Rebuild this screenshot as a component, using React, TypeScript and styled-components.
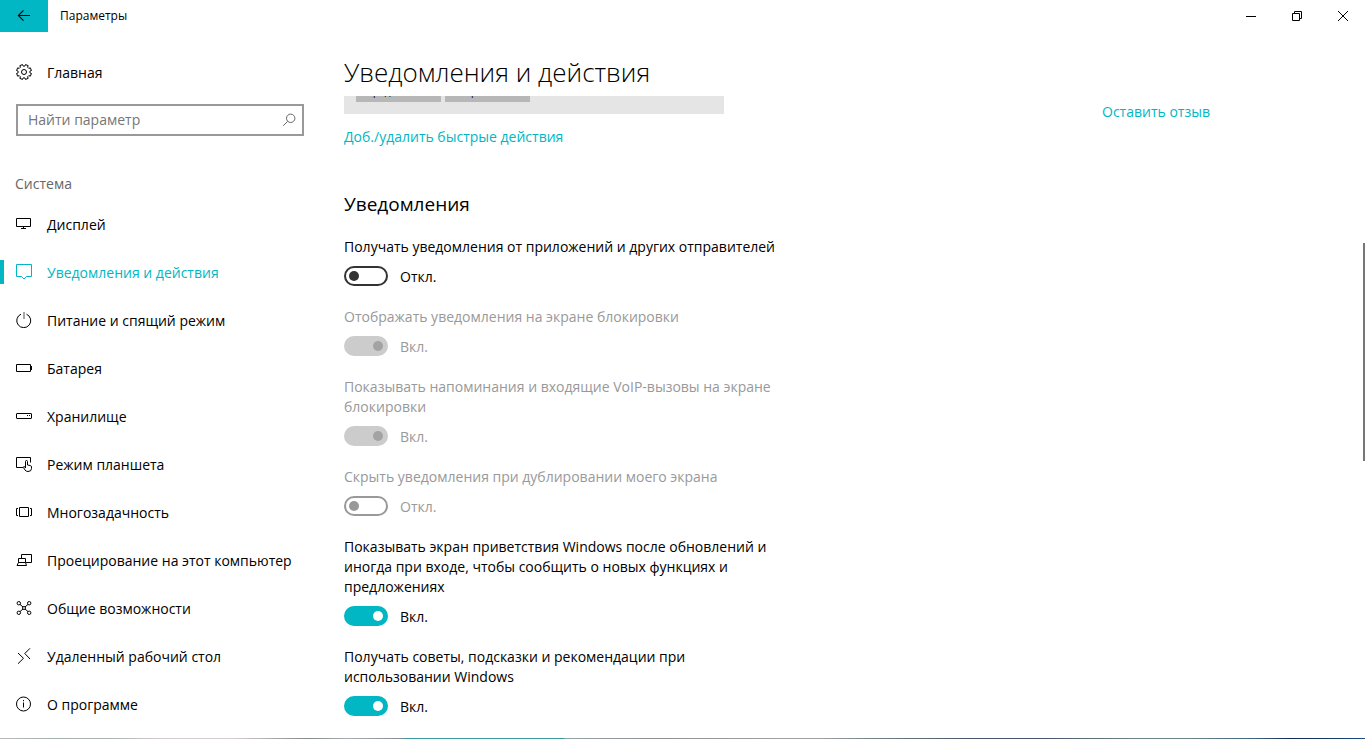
import React, { useId, useState } from "react";
import styled, { createGlobalStyle, css } from "styled-components";

const accent = "#00b7c3";

const GlobalStyle = createGlobalStyle`
  *, *::before, *::after { box-sizing: border-box; }
  body {
    margin: 0;
    background: #fff;
    color: #000;
    font: 14px/20px "Open Sans", "Noto Sans", sans-serif;
  }
  button, input { font: inherit; color: inherit; }
  h1, h2, p { margin: 0; font-weight: 400; }
`;

const Window = styled.div`
  display: flex;
  flex-direction: column;
  min-height: 100vh;
`;

const TitleBar = styled.header`
  display: flex;
  align-items: center;
  height: 32px;
`;

const BackButton = styled.button`
  display: grid;
  place-items: center;
  width: 48px;
  height: 32px;
  padding: 0;
  border: 0;
  background: ${accent};
`;

const WindowTitle = styled.span`
  flex: 1;
  padding-left: 12px;
  font-size: 12px;
  line-height: 16px;
`;

const CaptionButton = styled.button`
  display: grid;
  place-items: center;
  width: 46px;
  height: 32px;
  padding: 0;
  border: 0;
  background: transparent;
`;

const Body = styled.div`
  display: flex;
  flex: 1;
`;

const Sidebar = styled.aside`
  flex: none;
  width: 320px;
  padding-top: 16px;
`;

const NavLink = styled.a<{ $active?: boolean }>`
  position: relative;
  display: flex;
  align-items: center;
  gap: 15px;
  height: 48px;
  padding-left: 16px;
  color: ${(p) => (p.$active ? accent : "#000")};
  text-decoration: none;
  white-space: nowrap;

  ${(p) =>
    p.$active &&
    css`
      &::before {
        content: "";
        position: absolute;
        left: 0;
        top: 12px;
        width: 4px;
        height: 24px;
        background: ${accent};
      }
    `}
`;

const ItemText = styled.span`
  padding-top: 2px;
`;

const SearchBox = styled.label`
  display: flex;
  align-items: center;
  height: 32px;
  margin: 8px 16px 0;
  padding: 0 6px 0 10px;
  border: 2px solid #999;
  color: #666;
`;

const SearchInput = styled.input`
  flex: 1;
  min-width: 0;
  padding: 0;
  border: 0;
  outline: 0;
  background: transparent;

  &::placeholder { color: #767676; opacity: 1; }
`;

const GroupTitle = styled.p`
  padding: 38px 0 6px 15px;
  color: #666;
`;

const Glyph = styled.svg`
  flex: none;
  display: block;
  fill: none;
  stroke: currentColor;
`;

const Main = styled.main`
  display: flex;
  flex: 1;
  flex-direction: column;
  min-width: 0;
`;

const PageTitle = styled.h1`
  height: 64px;
  padding: 20px 0 0 24px;
  font-size: 26px;
  font-weight: 300;
  line-height: 40px;
`;

const ScrollArea = styled.div`
  position: relative;
  display: flex;
  flex: 1;
  justify-content: space-between;
  padding-left: 24px;
`;

const ScrollThumb = styled.div`
  position: absolute;
  right: 0;
  top: 147px;
  width: 2px;
  height: 34%;
  background: #767676;
`;

const Column = styled.div`
  width: 440px;
  padding-bottom: 22px;
`;

const Related = styled.div`
  width: 263px;
  padding-top: 6px;
`;

const TextLink = styled.a`
  color: ${accent};
  text-decoration: none;
`;

const ActionsPreview = styled.div`
  display: flex;
  align-items: flex-end;
  gap: 4px;
  width: 380px;
  height: 18px;
  margin-bottom: 13px;
  padding: 0 12px 12px;
  overflow: hidden;
  background: #e5e5e5;
`;

const ActionTile = styled.div`
  display: flex;
  flex: none;
  align-items: flex-end;
  width: 85px;
  height: 60px;
  padding: 0 4px 5px;
  background: #b7b7b7;
  font-size: 10px;
  line-height: 12px;
`;

const SectionTitle = styled.h2`
  padding: 43px 0 19px;
  font-size: 19px;
  line-height: 28px;
`;

const Settings = styled.div`
  display: flex;
  flex-direction: column;
  gap: 21px;
`;

const Setting = styled.div<{ $disabled?: boolean }>`
  display: flex;
  flex-direction: column;
  gap: 9px;
  color: ${(p) => (p.$disabled ? "#999" : "#000")};
`;

const SwitchRow = styled.div`
  display: flex;
  align-items: center;
  gap: 12px;
  height: 20px;
`;

const Switch = styled.input`
  display: flex;
  align-items: center;
  width: 44px;
  height: 20px;
  margin: 0;
  padding: 0 3px;
  appearance: none;
  border: 2px solid #333;
  border-radius: 10px;
  color: #333;

  &::before {
    content: "";
    width: 10px;
    height: 10px;
    border-radius: 5px;
    background: currentColor;
  }

  &:checked {
    justify-content: flex-end;
    border-color: ${accent};
    background: ${accent};
    color: #fff;
  }

  &:disabled {
    border-color: #999;
    color: #999;
  }

  &:checked:disabled {
    border-color: #ccc;
    background: #ccc;
    color: #a3a3a3;
  }
`;

const DesktopEdge = styled.div`
  height: 1px;
  background: linear-gradient(
    90deg,
    #b9b9b9 0%, #a3b0b0 4%, #a9b3b2 8%, #d6cccd 12%, #d8cdce 17%, #85898b 22.5%,
    #a5aeb0 25.5%, #858a9b 29.5%, #3f99a0 29.6%, #3f99a0 41.3%, #93a3a6 41.4%,
    #8e9092 48%, #a0a0a0 58%, #a0a0a0 60%, #6f8287 64%, #48566a 71%, #44546a 76%,
    #6c838a 83%, #6b868a 87%, #3e6480 92%, #122a52 94.5%, #1a4a80 100%
  );
`;

const gearPath = Array.from({ length: 8 }, (_, tooth) => {
  const corner = (offset: number, radius: number) => {
    const angle = ((tooth * 45 + 22.5 + offset) * Math.PI) / 180;
    return `${(8 + radius * Math.cos(angle)).toFixed(2)} ${(8 + radius * Math.sin(angle)).toFixed(2)}`;
  };
  return `${tooth ? "L" : "M"}${corner(-14, 6)}L${corner(-11, 7.6)}L${corner(11, 7.6)}L${corner(14, 6)}`;
}).join("") + "Z";

const icons = {
  gear: (
    <>
      <path d={gearPath} />
      <circle cx="8" cy="8" r="2.5" />
    </>
  ),
  display: <path d="M.5 2.5h14v8H.5zM7.5 10.5v2M5 12.5h5" />,
  notification: <path d="M.5.5h15v12h-5L8 15l-2.5-2.5h-5z" />,
  power: (
    <>
      <path d="M5 2.2a7 7 0 1 0 5.500 0" />
      <path d="M8 0v7" opacity=".7" />
    </>
  ),
  battery: <path d="M.5 4.500h14v7H.5zM15.500 6v4" />,
  storage: (
    <>
      <rect x=".5" y="5.5" width="15" height="5" rx=".5" />
      <path d="M11 7.500h1M13 7.500h1" />
    </>
  ),
  tablet: (
    <>
      <path d="M7 11.500H.5V1.500h14v5" />
      <path d="M9.500 12V5.500q0-1 1-1t1 1V9l3 .6q1 .3 1 1.400v1.500q0 3-3.500 3-2 0-3-1.500l-1.600-2.500q0-1.200 1.200-.8l.9 1.300" />
    </>
  ),
  multitask: <path d="M3.500 3.500h9v9h-9zM2 4.500H.5v7H2M14 4.500h1.500v7H14" />,
  project: <path d="M5.500 6V2.500h10v8H10M2.500 10.500v-4h7v4zM2.500 10.500l-1.500 3h9.500l-1-3" />,
  shared: (
    <>
      <circle cx="2.8" cy="3.2" r="1.7" />
      <circle cx="13.2" cy="3.2" r="1.7" />
      <circle cx="2.8" cy="12.8" r="1.7" />
      <circle cx="13.2" cy="12.8" r="1.7" />
      <circle cx="8" cy="8" r="1.5" />
      <path d="M4 4.400 7 7M12 4.400 9 7M4 11.600 7 9M12 11.600 9 9" />
    </>
  ),
  remote: <path d="M2 5l5.500 5.300L2 15.700M14 .3 8.800 5.500 14 11" />,
  about: (
    <>
      <circle cx="7.5" cy="8" r="7" />
      <path d="M7.500 6.500v5M7.500 4v1.200" />
    </>
  ),
  search: (
    <>
      <circle cx="10.7" cy="6.3" r="4.2" />
      <path d="M7.700 9.300 3.200 13.800" />
    </>
  ),
  back: <path d="M14 7.500H2.500M7.500 2.300 2.300 7.500l5.200 5.200" strokeWidth="1.1" />,
  minimize: <path d="M4 8.500h10" />,
  restore: <path d="M4.500 5.500h7v7h-7zM6.500 5.500v-2h7v7h-2" />,
  close: <path d="M4 3l10 10M14 3 4 13" />,
};

type IconName = keyof typeof icons;

function Icon({ name }: { name: IconName }) {
  return (
    <Glyph width="16" height="16" viewBox="0 0 16 16" aria-hidden="true">
      {icons[name]}
    </Glyph>
  );
}

const sections: { icon: IconName; label: string; active?: boolean }[] = [
  { icon: "display", label: "Дисплей" },
  { icon: "notification", label: "Уведомления и действия", active: true },
  { icon: "power", label: "Питание и спящий режим" },
  { icon: "battery", label: "Батарея" },
  { icon: "storage", label: "Хранилище" },
  { icon: "tablet", label: "Режим планшета" },
  { icon: "multitask", label: "Многозадачность" },
  { icon: "project", label: "Проецирование на этот компьютер" },
  { icon: "shared", label: "Общие возможности" },
  { icon: "remote", label: "Удаленный рабочий стол" },
  { icon: "about", label: "О программе" },
];

interface ToggleProps {
  label: string;
  on?: boolean;
  disabled?: boolean;
}

const toggles: ToggleProps[] = [
  { label: "Получать уведомления от приложений и других отправителей" },
  { label: "Отображать уведомления на экране блокировки", on: true, disabled: true },
  { label: "Показывать напоминания и входящие VoIP-вызовы на экране блокировки", on: true, disabled: true },
  { label: "Скрыть уведомления при дублировании моего экрана", disabled: true },
  {
    label:
      "Показывать экран приветствия Windows после обновлений и иногда при входе, чтобы сообщить о новых функциях и предложениях",
    on: true,
  },
  { label: "Получать советы, подсказки и рекомендации при использовании Windows", on: true },
];

function Toggle({ label, on = false, disabled }: ToggleProps) {
  const id = useId();
  const [checked, setChecked] = useState(on);
  return (
    <Setting $disabled={disabled}>
      <label htmlFor={id}>{label}</label>
      <SwitchRow>
        <Switch
          id={id}
          type="checkbox"
          role="switch"
          checked={checked}
          disabled={disabled}
          onChange={(e) => setChecked(e.target.checked)}
        />
        <ItemText>{checked ? "Вкл." : "Откл."}</ItemText>
      </SwitchRow>
    </Setting>
  );
}

export default function App() {
  return (
    <Window>
      <GlobalStyle />
      <TitleBar>
        <BackButton aria-label="Назад"><Icon name="back" /></BackButton>
        <WindowTitle>Параметры</WindowTitle>
        <CaptionButton aria-label="Свернуть"><Icon name="minimize" /></CaptionButton>
        <CaptionButton aria-label="Восстановить"><Icon name="restore" /></CaptionButton>
        <CaptionButton aria-label="Закрыть"><Icon name="close" /></CaptionButton>
      </TitleBar>
      <Body>
        <Sidebar>
          <NavLink href="#home">
            <Icon name="gear" />
            <ItemText>Главная</ItemText>
          </NavLink>
          <SearchBox>
            <SearchInput type="text" placeholder="Найти параметр" aria-label="Найти параметр" />
            <Icon name="search" />
          </SearchBox>
          <GroupTitle>Система</GroupTitle>
          <nav>
            {sections.map((s) => (
              <NavLink key={s.icon} href={`#${s.icon}`} $active={s.active}>
                <Icon name={s.icon} />
                <ItemText>{s.label}</ItemText>
              </NavLink>
            ))}
          </nav>
        </Sidebar>
        <Main>
          <PageTitle>Уведомления и действия</PageTitle>
          <ScrollArea>
            <Column>
              <ActionsPreview>
                <ActionTile>Передача</ActionTile>
                <ActionTile>Батарея</ActionTile>
              </ActionsPreview>
              <TextLink href="#quick-actions">Доб./удалить быстрые действия</TextLink>
              <SectionTitle>Уведомления</SectionTitle>
              <Settings>
                {toggles.map((t) => (
                  <Toggle key={t.label} {...t} />
                ))}
              </Settings>
            </Column>
            <Related>
              <TextLink href="#feedback">Оставить отзыв</TextLink>
            </Related>
            <ScrollThumb />
          </ScrollArea>
        </Main>
      </Body>
      <DesktopEdge />
    </Window>
  );
}
